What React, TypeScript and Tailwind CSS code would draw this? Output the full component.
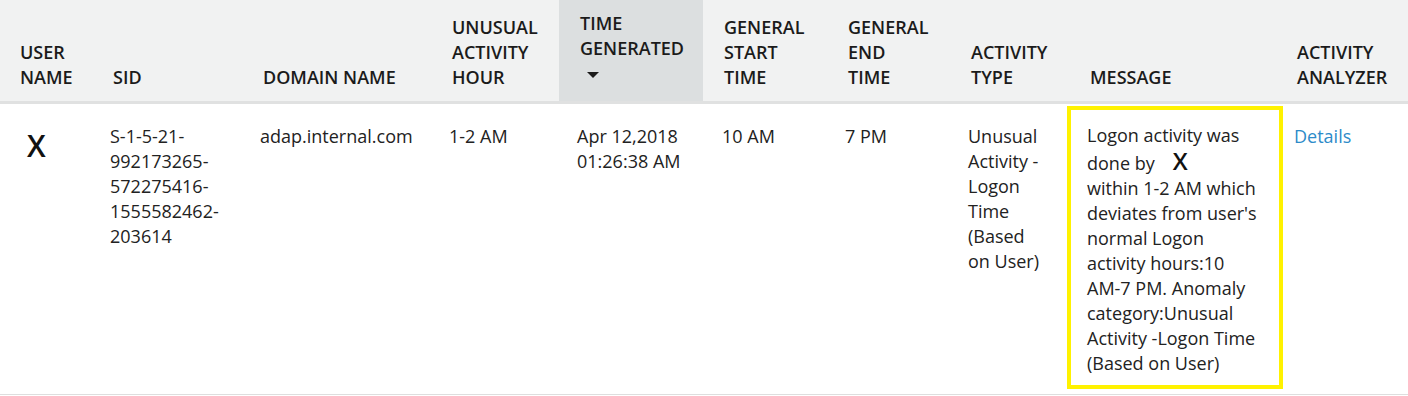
import React from "react";

const th = "h-[102px] align-bottom pb-[11px] pl-[21px] text-left font-semibold text-[18px] leading-[25px] text-[#1b1b1b] bg-[#f1f2f2] border-b-[3px] border-[#e0e1e1]";
const td = "align-top pt-[20px] pl-[18px] text-[18px] leading-[25px] text-[#222] font-normal";

export default function App() {
  return (
    <div className="w-[1408px] h-[396px] bg-white" style={{ fontFamily: '"Open Sans", "Noto Sans", sans-serif' }}>
      <table className="table-fixed border-collapse w-[1408px]">
        <colgroup>
          <col className="w-[92px]" />
          <col className="w-[150px]" />
          <col className="w-[189px]" />
          <col className="w-[128px]" />
          <col className="w-[144px]" />
          <col className="w-[124px]" />
          <col className="w-[123px]" />
          <col className="w-[119px]" />
          <col className="w-[207px]" />
          <col className="w-[132px]" />
        </colgroup>
        <thead>
          <tr>
            <th className={th + " !pl-[20px]"}>USER<br />NAME</th>
            <th className={th}>SID</th>
            <th className={th}>DOMAIN NAME</th>
            <th className={th}>UNUSUAL<br />ACTIVITY<br />HOUR</th>
            <th className={th + " !bg-[#dcdfe0] !pb-0"}>
              <div className="pb-[11px]">
                <div className="-translate-y-[4px]">TIME<br />GENERATED</div>
                <div className="h-[25px] pt-[7px] pl-[7px]">
                  <svg width="12" height="6" viewBox="0 0 12 6" className="block">
                    <path d="M0 0 H12 L6 6 Z" fill="#1b1b1b" />
                  </svg>
                </div>
              </div>
            </th>
            <th className={th}>GENERAL<br />START<br />TIME</th>
            <th className={th}>GENERAL<br />END<br />TIME</th>
            <th className={th}>ACTIVITY<br />TYPE</th>
            <th className={th}>MESSAGE</th>
            <th className={th}>ACTIVITY<br />ANALYZER</th>
          </tr>
        </thead>
        <tbody>
          <tr className="border-b border-[#dedede]">
            <td className={td + " !pl-[27px]"}>
              <div className="mt-[6px] text-[30px] leading-[32px] font-semibold text-[#111]">X</div>
            </td>
            <td className={td}>S-1-5-21-<br />992173265-<br />572275416-<br />1555582462-<br />203614</td>
            <td className={td}>adap.internal.com</td>
            <td className={td}>1-2 AM</td>
            <td className={td}>Apr 12,2018<br />01:26:38 AM</td>
            <td className={td + " !pl-[19px]"}>10 AM</td>
            <td className={td}>7 PM</td>
            <td className={td}>Unusual<br />Activity -<br />Logon<br />Time<br />(Based<br />on User)</td>
            <td className="align-top pt-[2px] pb-[5px] pl-0 text-[18px] leading-[25px] text-[#222]">
              <div className="-ml-[2px] w-[216px] border-[4px] border-[#fff200] pl-[16px] pt-[13px] pb-[9px] whitespace-nowrap">
                Logon activity was<br />
                done by<span className="ml-[18px] text-[24px] font-semibold text-[#111] leading-[25px]">X</span><br />
                within 1-2 AM which<br />
                deviates from user's<br />
                normal Logon<br />
                activity hours:10<br />
                AM-7 PM. Anomaly<br />
                category:Unusual<br />
                Activity -Logon Time<br />
                (Based on User)
              </div>
            </td>
            <td className={td}>
              <a className="text-[#2d8bc9] cursor-pointer">Details</a>
            </td>
          </tr>
        </tbody>
      </table>
    </div>
  );
}
